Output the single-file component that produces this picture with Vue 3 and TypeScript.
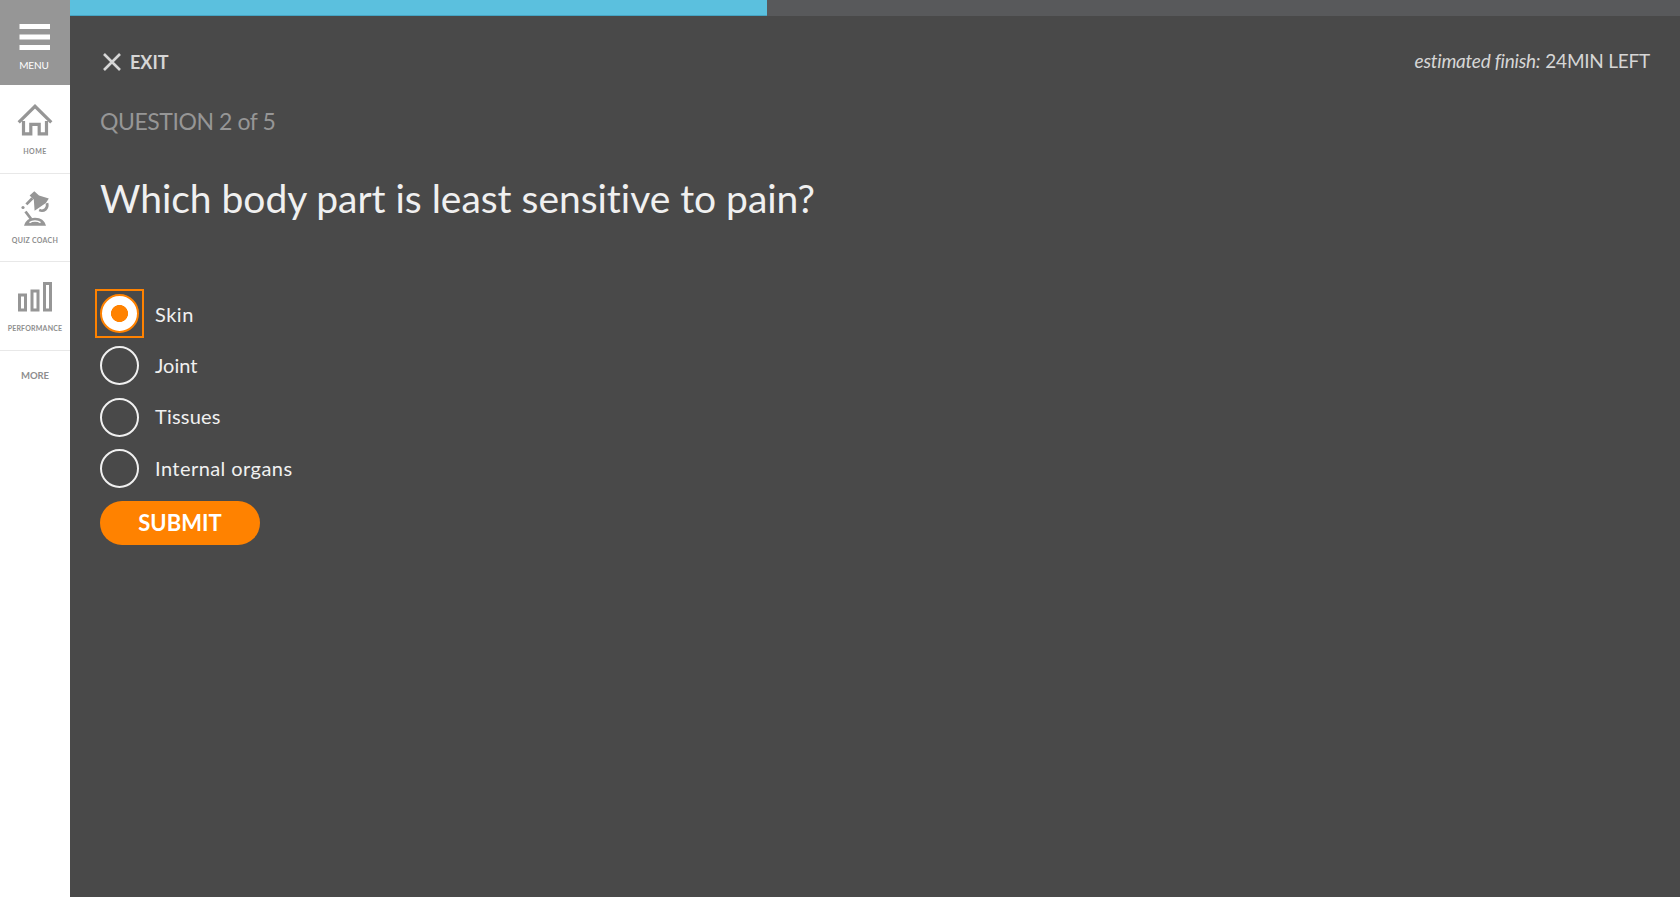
<script setup lang="ts">
import { ref } from 'vue'

const options: string[] = ['Skin', 'Joint', 'Tissues', 'Internal organs']
const selected = ref<string>('Skin')
const current = 2
const total = 5
const progress = 43.3
</script>

<template>
  <div class="app">
    <nav class="sidebar">
      <button class="menu">
        <svg width="32" height="28" viewBox="0 0 32 28"><path d="M.5 3.500h30.500M.5 14h30.500M.5 24.500h30.500" stroke="#fff" stroke-width="5" /></svg>
        <span class="menu-label">MENU</span>
      </button>
      <a class="item">
        <svg width="70" height="36" viewBox="0 0 70 36" fill="none" stroke="#969696" stroke-width="3.200">
          <path d="M18.700 20.300 35 4.300l16.300 16" />
          <path d="M23.500 19v12.800h7.300v-9.500h8.400v9.500h7.300V19" />
        </svg>
        <span class="label home">HOME</span>
      </a>
      <a class="item">
        <svg width="70" height="36" viewBox="0 0 70 36" fill="none" stroke="#969696">
          <path d="m34.300 .3 4.700 4.200 9.800 3-2.900 4.600-11.300 7.700-.8-11.300-4.200-3.900z" fill="#969696" stroke="none" />
          <path d="m32.400 7.200-6 6.200M25.500 20.500l5.600 7.500" stroke-width="2.800" />
          <circle cx="23" cy="16.500" r="1.600" fill="#969696" stroke="none" />
          <path d="M47 12.200c1.400 5.200-3 9-7.800 6.900" stroke-width="2.700" />
          <path d="M24 34.700C25.500 29.500 29 26.700 35 26.700s9.500 2.800 11 8z" fill="#969696" stroke="none" />
          <path d="M29.500 31.600c3-2 8-2 11 0" stroke="#fff" stroke-width="1.500" />
        </svg>
        <span class="label coach">QUIZ COACH</span>
      </a>
      <a class="item">
        <svg width="70" height="36" viewBox="0 0 70 36" fill="none" stroke="#969696" stroke-width="3">
          <path d="M19.500 16h6v15h-6zM32 12h6v19h-6zM44.500 4.500h6V31h-6z" />
        </svg>
        <span class="label perf">PERFORMANCE</span>
      </a>
      <a class="more">MORE</a>
    </nav>

    <main class="main">
      <div class="track"><div class="fill" :style="{ width: progress + '%' }"></div></div>
      <header class="top">
        <button class="exit">
          <svg width="18" height="18" viewBox="0 0 18 18"><path d="m1 1 16 16M17 1 1 17" stroke="#d6d6d6" stroke-width="2.600" /></svg>
          <span>EXIT</span>
        </button>
        <div class="estimate"><em>estimated finish:</em><span>24MIN LEFT</span></div>
      </header>
      <p class="count"><span>QUESTION {{ current }} of {{ total }}</span></p>
      <h1 class="title"><span>Which body part is least sensitive to pain?</span></h1>
      <div class="options">
        <label v-for="(option, i) in options" :key="option" class="option" :class="'option-' + i">
          <input v-model="selected" type="radio" name="answer" :value="option" />
          <span class="radio" :class="{ checked: selected === option }"></span>
          <span class="option-text">{{ option }}</span>
        </label>
      </div>
      <button class="submit"><span>SUBMIT</span></button>
    </main>
  </div>
</template>

<style>
body {
  margin: 0;
  background: #494949;
}
</style>

<style scoped>
.app {
  display: flex;
  height: 100vh;
  overflow: hidden;
  font-family: Lato, "Open Sans", sans-serif;
  font-variant-ligatures: none;
  color: #f0f0f0;
}
button {
  border: 0;
  padding: 0;
  background: none;
  font-family: inherit;
  color: inherit;
}
svg {
  display: block;
}
.sidebar {
  width: 70px;
  flex: none;
  background: #fff;
  color: #8e8e8e;
  display: flex;
  flex-direction: column;
}
.menu {
  height: 85px;
  box-sizing: border-box;
  padding-top: 23px;
  background: #969696;
  color: #fff;
  display: flex;
  flex-direction: column;
  align-items: center;
}
.menu-label {
  margin: 8px 2px 0 0;
  font-size: 10px;
  line-height: 12px;
  letter-spacing: -0.1px;
}
.item {
  height: 88.500px;
  box-sizing: border-box;
  border-bottom: 1px solid #e8e8e8;
  padding-top: 17px;
  display: flex;
  flex-direction: column;
  align-items: center;
}
.label {
  margin-top: 8px;
  font-size: 7px;
  font-weight: 700;
  line-height: 10px;
  white-space: nowrap;
}
.home {
  letter-spacing: 0.5px;
}
.coach {
  letter-spacing: 0.27px;
}
.perf {
  letter-spacing: 0.2px;
}
.more {
  margin-top: 18px;
  font-size: 9.500px;
  line-height: 14px;
  letter-spacing: -0.1px;
  font-weight: 700;
  text-align: center;
}
.main {
  flex: 1;
  background: #494949;
  display: flex;
  flex-direction: column;
}
.track {
  height: 16px;
  flex: none;
  background: #58595b;
}
.fill {
  height: 16px;
  box-sizing: border-box;
  background: #5bc0de;
  border-bottom: 1px solid #46a5c4;
}
.top {
  display: flex;
  justify-content: space-between;
  align-items: center;
  height: 28px;
  margin: 32px 30px 0 33px;
}
.exit {
  display: flex;
  align-items: center;
  gap: 9px;
  font-size: 18px;
  line-height: 28px;
  font-weight: 700;
  color: #d6d6d6;
}
.estimate {
  display: flex;
  gap: 5px;
  font-size: 19px;
  line-height: 26px;
  letter-spacing: -0.24px;
  padding-bottom: 2px;
  color: #d6d6d6;
  white-space: nowrap;
}
.count {
  margin: 31px 0 0 30px;
  font-size: 23px;
  line-height: 28px;
  letter-spacing: -0.43px;
  color: #969696;
}
.title {
  margin: 39px 0 0 30px;
  font-size: 39px;
  line-height: 48px;
  font-weight: 400;
  letter-spacing: -0.03px;
  white-space: nowrap;
}
.options {
  margin: 66px 0 0 25px;
  display: flex;
  flex-direction: column;
}
.option {
  display: flex;
  align-items: center;
  height: 51.670px;
  font-size: 20px;
  line-height: 28px;
}
.option-0 {
  letter-spacing: 0.5px;
}
.option-2 {
  letter-spacing: 0.2px;
}
.option-3 {
  letter-spacing: 0.44px;
}
.option-2 .option-text,
.option-3 .option-text {
  padding-bottom: 2px;
}
.option input {
  appearance: none;
  width: 0;
  height: 0;
  margin: 0;
}
.radio {
  width: 39px;
  height: 39px;
  box-sizing: border-box;
  border: 2px solid #f0f0f0;
  border-radius: 50%;
  margin: 0 16px 0 5px;
}
.radio.checked {
  border-color: #ff8200;
  background: radial-gradient(circle, #ff8200 8.200px, #fff 8.800px);
  position: relative;
}
.radio.checked::after {
  content: "";
  position: absolute;
  inset: -7px;
  border: 2px solid #ff8200;
}
.submit {
  width: 160px;
  height: 44px;
  margin: 6px 0 0 30px;
  border-radius: 22px;
  background: #ff8200;
  color: #fff;
  font-size: 22px;
  line-height: 44px;
  font-weight: 700;
}
</style>
